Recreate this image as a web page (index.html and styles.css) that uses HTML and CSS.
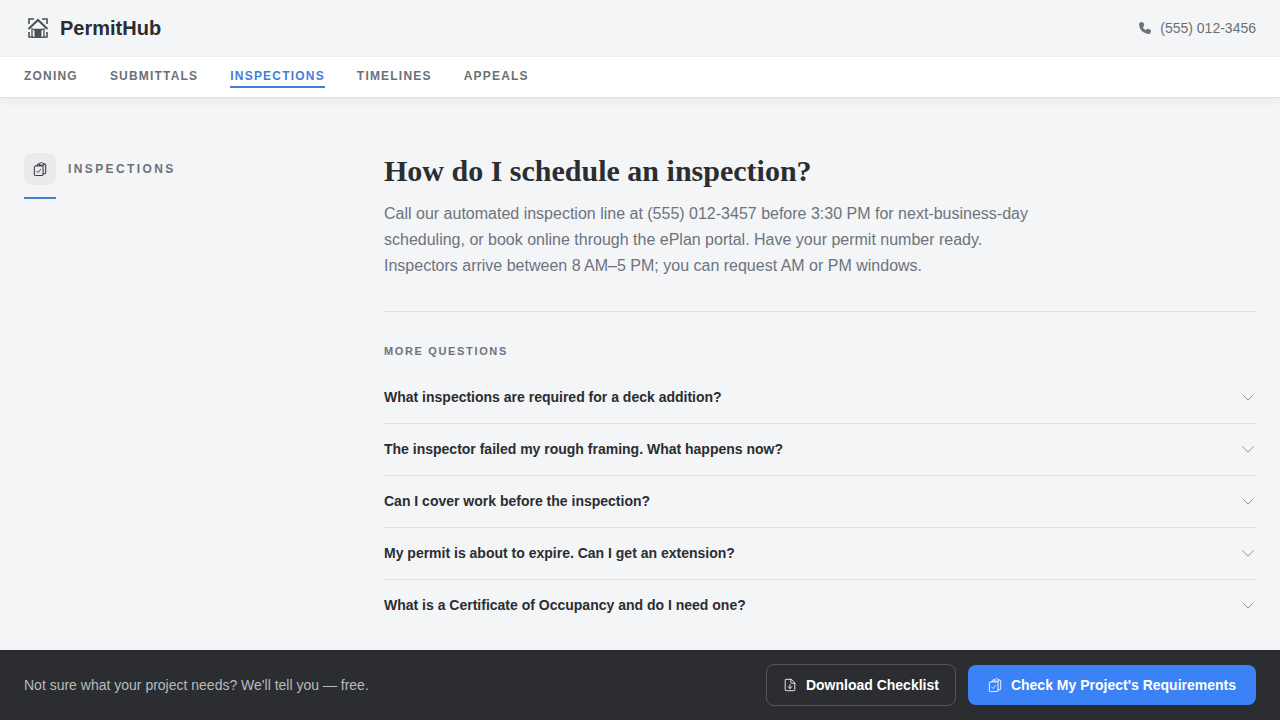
FILE: index.html
```html
<!DOCTYPE html>
<html lang="en">
<head>
<meta charset="utf-8">
<meta name="viewport" content="width=device-width, initial-scale=1">
<title>PermitHub – Inspections</title>
<link rel="stylesheet" href="styles.css">
</head>
<body>
<svg class="sprite" aria-hidden="true">
  <symbol id="chevron" viewBox="0 0 16 16"><path fill="none" stroke="currentColor" stroke-linecap="round" stroke-linejoin="round" d="M2 5.500l6 6 6-6"/></symbol>
  <symbol id="clipboards" viewBox="0 0 16 16">
    <g fill="none" stroke="currentColor" stroke-linecap="round" stroke-linejoin="round">
      <path d="M5 4V3Q5 2.200 6 2.200H7M12.500 2.200h.900Q14.500 2.200 14.500 3.200v9.300Q14.500 13.500 13.500 13.500H11.500"/>
      <path d="M7 3.200V2.200L8.500 1.500Q9 .6 9.800.6T11 1.500L12.500 2.200v1z"/>
      <path d="M3.500 4.500H2.500Q1.500 4.500 1.500 5.500v9Q1.500 15.500 2.500 15.500h8Q11.500 15.500 11.500 14.500v-9Q11.500 4.500 10.500 4.500H3.500"/>
      <path stroke-width=".9" d="M4.300 10.500l1.500 1.500 3-3.500"/>
    </g>
  </symbol>
</svg>

<header class="header">
  <div class="topbar">
    <a class="brand" href="#">
      <svg class="brand-icon" viewBox="0 0 28 28" aria-hidden="true">
        <g fill="none" stroke="currentColor" stroke-width="1.600">
          <path d="M5 10V5h5M18 5h5v5M5 18v5h4M23 18v5h-4"/>
          <path stroke-width="2" d="M4.500 15L14 6l9.500 9"/>
          <path stroke-width="1.300" d="M8 14v9M20 14v9M8 23.300h12M9 15.500h10"/>
        </g>
        <path fill="currentColor" d="M10.500 15h7v8h-7z"/>
      </svg>
      <span>PermitHub</span>
    </a>
    <a class="phone" href="tel:5550123456">
      <svg class="phone-icon" viewBox="0 0 16 16" aria-hidden="true"><path fill="currentColor" d="M4.600 1.200L2 2Q1.200 2.300 1.200 3.200C1.200 9.700 6.300 14.800 12.800 14.800Q13.700 14.800 14 14L14.800 11.400Q15 10.500 14.200 10.100L11.300 8.900Q10.600 8.700 10.100 9.200L9 10.600Q6.600 9.400 5.400 7L6.800 5.900Q7.300 5.400 7.100 4.700L5.900 1.800Q5.500 1 4.600 1.200Z"/></svg>
      <span>(555) 012-3456</span>
    </a>
  </div>
  <nav class="nav" aria-label="Topics">
    <a href="#">Zoning</a>
    <a href="#">Submittals</a>
    <a class="active" href="#" aria-current="page">Inspections</a>
    <a href="#">Timelines</a>
    <a href="#">Appeals</a>
  </nav>
</header>

<main class="main">
  <aside class="aside">
    <div class="topic">
      <span class="topic-icon"><svg class="icon" aria-hidden="true"><use href="#clipboards"/></svg></span>
      <span class="topic-label">Inspections</span>
    </div>
    <div class="topic-rule"></div>
  </aside>
  <section class="content">
    <h1>How do I schedule an inspection?</h1>
    <p class="answer">Call our automated inspection line at (555) 012-3457 before 3:30 PM for next-business-day scheduling, or book online through the ePlan portal. Have your permit number ready. Inspectors arrive between 8 AM–5 PM; you can request AM or PM windows.</p>
    <div class="more">
      <h2>More questions</h2>
      <ul class="questions">
        <li><button type="button" aria-expanded="false"><span>What inspections are required for a deck addition?</span><svg class="chevron" aria-hidden="true"><use href="#chevron"/></svg></button></li>
        <li><button type="button" aria-expanded="false"><span>The inspector failed my rough framing. What happens now?</span><svg class="chevron" aria-hidden="true"><use href="#chevron"/></svg></button></li>
        <li><button type="button" aria-expanded="false"><span>Can I cover work before the inspection?</span><svg class="chevron" aria-hidden="true"><use href="#chevron"/></svg></button></li>
        <li><button type="button" aria-expanded="false"><span>My permit is about to expire. Can I get an extension?</span><svg class="chevron" aria-hidden="true"><use href="#chevron"/></svg></button></li>
        <li><button type="button" aria-expanded="false"><span>What is a Certificate of Occupancy and do I need one?</span><svg class="chevron" aria-hidden="true"><use href="#chevron"/></svg></button></li>
      </ul>
    </div>
  </section>
</main>

<footer class="cta">
  <p>Not sure what your project needs? We'll tell you — free.</p>
  <div class="actions">
    <button class="btn btn-outline" type="button">
      <svg class="icon" viewBox="0 0 16 16" aria-hidden="true"><path fill="none" stroke="currentColor" stroke-linecap="round" stroke-linejoin="round" d="M9 1.500H3.500Q2.500 1.500 2.500 2.500v11Q2.500 14.500 3.500 14.500h9Q13.500 14.500 13.500 13.500V6zV5Q9 6 10 6h3.500M8 7.500v4.500M6 10l2 2 2-2"/></svg>
      <span>Download Checklist</span>
    </button>
    <button class="btn btn-primary" type="button">
      <svg class="icon" aria-hidden="true"><use href="#clipboards"/></svg>
      <span>Check My Project's Requirements</span>
    </button>
  </div>
</footer>
</body>
</html>
```

FILE: styles.css
```css
* {
  box-sizing: border-box;
}

body {
  margin: 0;
  min-height: 100vh;
  display: flex;
  flex-direction: column;
  background: #f3f5f7;
  color: #2b2d30;
  font-family: "Liberation Sans", Arial, sans-serif;
  font-size: 14px;
  line-height: 20px;
}

h1, h2, p, ul {
  margin: 0;
  padding: 0;
}

a {
  color: inherit;
  text-decoration: none;
}

button {
  font: inherit;
  color: inherit;
  cursor: pointer;
}

.sprite {
  display: none;
}

.icon {
  width: 14px;
  height: 14px;
  flex: none;
}

.header {
  position: sticky;
  top: 0;
  background: #fff;
  border-bottom: 1px solid #dfe1e3;
  box-shadow: 0 2px 12px rgba(0, 0, 0, 0.06);
}

.topbar {
  display: flex;
  align-items: center;
  justify-content: space-between;
  padding: 14px 24px;
  background: #f3f5f7;
  border-bottom: 1px solid #eceeef;
}

.brand {
  display: flex;
  align-items: center;
  gap: 8px;
  font-size: 20px;
  line-height: 28px;
  font-weight: 700;
}

.brand-icon {
  width: 28px;
  height: 28px;
  color: #4b5053;
}

.phone {
  display: flex;
  align-items: center;
  gap: 8px;
  color: #6b7075;
}

.phone-icon {
  width: 14px;
  height: 14px;
}

.nav {
  display: flex;
  gap: 32px;
  padding: 8px 24px 9px;
  color: #6b7075;
  font-size: 12px;
  line-height: 16px;
  font-weight: 700;
  letter-spacing: 0.1em;
  text-transform: uppercase;
}

.nav a {
  padding: 3px 0 2px;
  border-bottom: 2px solid transparent;
}

.nav .active {
  color: #3f7fdc;
  border-color: #3f7fdc;
}

.main {
  flex: 1;
  display: grid;
  grid-template-columns: 312px 1fr;
  gap: 48px;
  padding: 55px 24px 18px;
}

.topic {
  display: flex;
  align-items: center;
  gap: 12px;
}

.topic-icon {
  display: flex;
  align-items: center;
  justify-content: center;
  width: 32px;
  height: 32px;
  border-radius: 8px;
  background: #e9ebed;
  color: #16181a;
}

.topic-label {
  color: #6d737b;
  font-size: 12px;
  font-weight: 700;
  letter-spacing: 0.2em;
  text-transform: uppercase;
}

.topic-rule {
  width: 32px;
  height: 2px;
  margin-top: 12px;
  background: #4583cf;
}

h1 {
  font-family: "Liberation Serif", "Times New Roman", serif;
  font-size: 30px;
  line-height: 36px;
}

.answer {
  max-width: 672px;
  margin-top: 12px;
  color: #6d737e;
  font-size: 16px;
  line-height: 26px;
}

.more {
  margin-top: 32px;
  padding-top: 31px;
  border-top: 1px solid #dcdfe1;
}

h2 {
  color: #6d737e;
  font-size: 11px;
  line-height: 16px;
  letter-spacing: 0.15em;
  text-transform: uppercase;
}

.questions {
  margin-top: 13px;
  list-style: none;
}

.questions li + li {
  border-top: 1px solid #dfe2e4;
}

.questions button {
  display: flex;
  align-items: center;
  justify-content: space-between;
  width: 100%;
  padding: 15px 1px 16px 0;
  border: 0;
  background: none;
  font-weight: 700;
  text-align: left;
}

.chevron {
  width: 14px;
  height: 14px;
  color: #85898d;
}

.cta {
  display: flex;
  align-items: center;
  justify-content: space-between;
  padding: 14px 24px;
  background: #2b2d30;
}

.cta p {
  color: #b8bbbe;
}

.actions {
  display: flex;
  align-items: center;
  gap: 12px;
}

.btn {
  display: flex;
  align-items: center;
  gap: 9px;
  padding: 10px 20px;
  border: 0;
  border-radius: 8px;
  color: #fff;
  font-weight: 700;
}

.btn-outline {
  padding: 10px 16px;
  border: 1px solid #55575a;
  background: transparent;
}

.btn-primary {
  background: #3b82f6;
}
```
